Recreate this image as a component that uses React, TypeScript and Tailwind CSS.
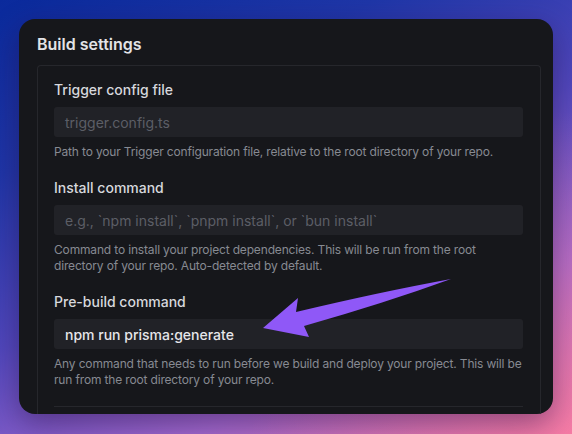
import React from 'react';

interface FieldProps {
  label: string;
  value?: string;
  placeholder?: string;
  help: string;
}

function Field({ label, value, placeholder, help }: FieldProps) {
  return (
    <div className="flex flex-col">
      <label className="text-[14px] leading-5 font-medium text-[#d7d8dd]">{label}</label>
      <div className="mt-[7px] h-[30px] rounded-[3px] bg-[#212227] px-[11px] flex items-center text-[14px]">
        {value ? (
          <span className="text-[#e6e6ea] font-medium">{value}</span>
        ) : (
          <span className="text-[#5c5e66]">{placeholder}</span>
        )}
      </div>
      <p className="mt-[7px] -mr-[4px] text-[12px] leading-4 tracking-[-0.16px] text-[#878a92]">{help}</p>
    </div>
  );
}

export default function App() {
  return (
    <div
      className="relative w-[572px] h-[434px] overflow-hidden bg-[linear-gradient(155deg,#0a2a9c_0%,#1f36a8_25%,#5148bd_50%,#a36ad0_75%,#f47ba6_100%)]"
      style={{ fontFamily: 'Inter, "Noto Sans", sans-serif' }}
    >
      <div className="absolute inset-0 bg-[radial-gradient(circle_at_100%_100%,rgba(250,125,165,0.55),transparent_45%)]" />
      <div className="relative ml-[19px] mt-[19px] w-[534px] h-[395px] rounded-[16px] bg-[#16171b] overflow-hidden shadow-[0_10px_30px_rgba(40,10,60,0.45)] flex flex-col">
        <h2 className="pl-[18px] pt-[13px] text-[16px] leading-6 font-semibold text-[#e3e3e6]">Build settings</h2>
        <div className="mt-[9px] ml-[18px] mr-[12px] flex-1 rounded-t-[4px] border border-b-0 border-[#26272c] pl-[16px] pr-[17px] pt-[14px] flex flex-col gap-[18px]">
          <Field
            label="Trigger config file"
            placeholder="trigger.config.ts"
            help="Path to your Trigger configuration file, relative to the root directory of your repo."
          />
          <Field
            label="Install command"
            placeholder="e.g., `npm install`, `pnpm install`, or `bun install`"
            help="Command to install your project dependencies. This will be run from the root directory of your repo. Auto-detected by default."
          />
          <Field
            label="Pre-build command"
            value="npm run prisma:generate"
            help="Any command that needs to run before we build and deploy your project. This will be run from the root directory of your repo."
          />
          <div className="h-px bg-[#26272c]" />
        </div>
      </div>
      {/* arrow */}
      <svg className="absolute left-0 top-0" width="572" height="434" viewBox="0 0 572 434">
        <path
          d="M263 328 L298 298 L296 312 Q380 292 451 279 Q385 303 304 326 L309 337 Z"
          fill="#8f58f7"
        />
      </svg>
    </div>
  );
}
